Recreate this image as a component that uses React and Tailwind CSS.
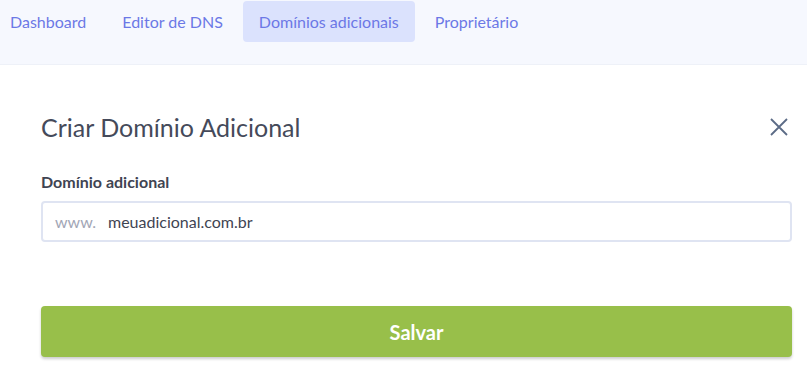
import React, { useState } from "react";

const tabs = ["Dashboard", "Editor de DNS", "Domínios adicionais", "Proprietário"];

const App = () => {
  const [active, setActive] = useState(2);
  const [domain, setDomain] = useState("meuadicional.com.br");

  return (
    <div className="w-[807px] h-[386px] bg-white overflow-hidden font-['Lato',sans-serif]">
      {/* tabs */}
      <div className="h-[65px] bg-[#f6f8fe] border-b border-[#eef1f8]">
        <div className="flex gap-1 -ml-[6px] pt-[1px]">
          {tabs.map((tab, i) => (
            <button
              key={tab}
              onClick={() => setActive(i)}
              className={
                i === active
                  ? "h-[41px] px-4 rounded-[4px] bg-[#dbe2fd] text-[#6c78e6] text-[16px]"
                  : "h-[41px] px-4 rounded-[4px] text-[#6c78e6] text-[16px]"
              }
            >
              {tab}
            </button>
          ))}
        </div>
      </div>

      {/* form */}
      <div className="px-[41px] pr-[15px] pt-[46px]">
        <div className="flex items-center justify-between">
          <h2 className="text-[25px] text-[#454a5a] leading-[32px]">
            Criar Domínio Adicional
          </h2>
          <button className="mr-[3px] text-[#5b6b86]">
            <svg width="20" height="20" viewBox="0 0 20 20" fill="none">
              <path
                d="M2 2L18 18M18 2L2 18"
                stroke="currentColor"
                strokeWidth="1.8"
              />
            </svg>
          </button>
        </div>

        <label className="block mt-[28px] text-[16px] leading-[22px] font-bold text-[#3f4452]">
          Domínio adicional
        </label>
        <div className="mt-[8px] flex items-center h-[41px] border-2 border-[#dfe4f2] rounded-[4px] pl-[12px]">
          <span className="text-[16px] text-[#a2a6b6] w-[53px]">www.</span>
          <input
            value={domain}
            onChange={(e) => setDomain(e.target.value)}
            className="flex-1 outline-none text-[16px] text-[#3f4452] bg-transparent"
          />
        </div>

        <button className="mt-[64px] w-full h-[51px] rounded-[4px] bg-[#98bf4a] shadow-[0_2px_3px_rgba(0,0,0,0.2)] text-white text-[20px] font-bold">
          Salvar
        </button>
      </div>
    </div>
  );
};

export default App;
